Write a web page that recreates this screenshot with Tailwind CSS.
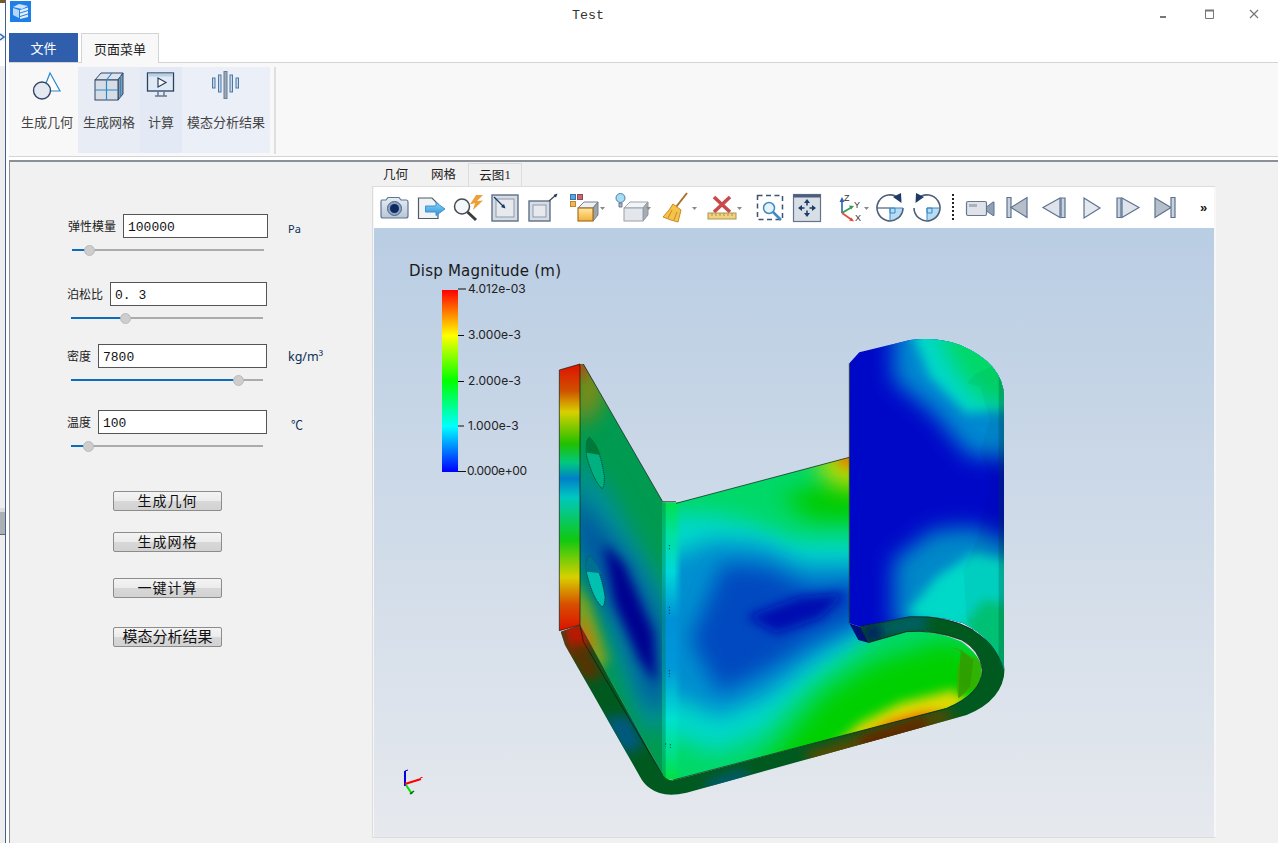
<!DOCTYPE html>
<html lang="zh">
<head>
<meta charset="utf-8">
<title>Test</title>
<script src="https://cdn.jsdelivr.net/npm/@tailwindcss/browser@4"></script>
</head>
<body class="m-0 overflow-hidden bg-white">
<div class="w-[1278px] h-[843px] flex overflow-hidden bg-white font-['Noto_Sans_CJK_SC','Noto_Sans',sans-serif] text-[#222]">
  <!-- sliver of the window behind -->
  <div class="w-[9px] shrink-0 flex bg-white">
    <div class="w-[5px] flex flex-col bg-[#f4f4f4]">
      <div class="h-[3px] bg-[#7a5a20]"></div>
      <div class="h-[30px] bg-white"></div>
      <svg class="w-[5px] h-[8px] shrink-0" viewBox="0 0 5 8"><path d="M0 1L4 4L0 7" fill="none" stroke="#2a70b8" stroke-width="1.500"/></svg>
      <div class="h-[25px] bg-white"></div>
      <div class="h-[442px] bg-[#eeeeee]"></div>
      <div class="h-[27px] bg-[#aab0b4] border-t-[4px] border-[#dddddd] border-b border-b-[#666]"></div>
      <div class="flex-1 bg-[#eeeeee]"></div>
    </div>
    <div class="w-px bg-[#46608e]"></div>
  </div>

  <div class="flex-1 flex flex-col min-w-0">
    <!-- title bar -->
    <div class="h-[33px] shrink-0 flex items-start bg-white">
      <svg class="w-[21px] h-[21px] mt-px ml-px shrink-0" viewBox="0 0 21 21">
        <rect width="21" height="21" fill="#1f7fe8"/>
        <path d="M3 6 L9 3 L18 5 L12 8 Z" fill="#cfe3fa"/>
        <path d="M3 7 L9 9 V17 L3 14 Z" fill="#b9d6f7"/>
        <path d="M10 9 L18 6.500 V9 L10 11.500 Z M10 12.500 L18 10 V12.500 L10 15 Z M10 16 L18 13.500 V16 L10 18 Z" fill="#e4f0fc"/>
      </svg>
      <div class="flex-1 text-center font-['Liberation_Mono',monospace] text-[13.300px] leading-[15px] pt-[8px] pr-[4px] text-[#333]">Test</div>
      <div class="w-[129px] flex items-start shrink-0">
        <svg class="w-[12px] h-[12px] mt-[10px] ml-[11px]" viewBox="0 0 12 12"><rect x="0" y="6" width="6" height="2" fill="#777"/></svg>
        <svg class="w-[12px] h-[12px] mt-[9px] ml-[32px]" viewBox="0 0 12 12"><path d="M1.500 1.500H9.500V9.500H1.500Z" fill="none" stroke="#777"/><path d="M1 1.500H10" stroke="#777" stroke-width="2"/></svg>
        <svg class="w-[12px] h-[12px] mt-[9px] ml-[33px]" viewBox="0 0 12 12"><path d="M1 1L9 9M9 1L1 9" stroke="#777" stroke-width="1.200"/></svg>
      </div>
    </div>

    <!-- ribbon tabs -->
    <div class="h-[29px] shrink-0 flex items-end bg-white relative z-10">
      <div class="w-[69px] h-[29px] bg-[#2f5fac] text-white text-[13px] flex items-center justify-center">文件</div>
      <div class="w-[78px] h-[30px] ml-[3px] -mb-px bg-[#f8f8f8] border border-b-0 border-[#d4d4d4] text-[13px] flex items-center justify-center">页面菜单</div>
    </div>

    <!-- ribbon -->
    <div class="h-[95px] shrink-0 bg-[#f8f8f8] border-t border-b border-[#d4d4d4] flex items-stretch pt-1 pb-[3px] text-[13px] text-[#444]">
      <div class="w-[69px] flex flex-col items-center">
        <svg class="w-[30px] h-[30px] mt-[4px] ml-[7px]" viewBox="0 0 30 30"><path d="M18 2 L28 20 H11Z" fill="#fff" stroke="#2a8ac8" stroke-width="1.200"/><circle cx="10" cy="19.500" r="8.500" fill="#e4e8f0" stroke="#334466" stroke-width="1.400"/></svg>
        <div class="mt-[12px] ml-[7px] leading-[18px]">生成几何</div>
      </div>
      <div class="w-[62px] flex flex-col items-center bg-[#e8ecf5]">
        <svg class="w-[30px] h-[30px] mt-[4px]" viewBox="0 0 30 30"><path d="M1 9 L7 2 H29 L24 9Z" fill="#dbe3ec" stroke="#334466"/><path d="M24 9 L29 2 V23 L24 29Z" fill="#8d99aa" stroke="#334466"/><rect x="1" y="9" width="23" height="20" fill="#d6dde5" stroke="#334466"/><path d="M12.500 9V29M1 19H24M12.500 9L18 2M26.500 5V26" stroke="#2a8ac8" stroke-width="1.200" fill="none"/></svg>
        <div class="mt-[12px] leading-[18px]">生成网格</div>
      </div>
      <div class="w-[42px] flex flex-col items-center bg-[#e4eaf5]">
        <svg class="w-[30px] h-[30px] mt-[4px]" viewBox="0 0 30 30"><rect x="1.500" y="2" width="26" height="18" fill="#dfeaf4" stroke="#2b3f63" stroke-width="1.300"/><rect x="2" y="2.500" width="25" height="3" fill="#b9d0e4"/><path d="M12 7 L20 11.500 L12 16Z" fill="#fff" stroke="#2b3f63" stroke-width="1.200"/><path d="M12 20V25M18 20V25M9 25H21" stroke="#66778e" stroke-width="1.500"/></svg>
        <div class="mt-[12px] leading-[18px]">计算</div>
      </div>
      <div class="w-[88px] flex flex-col items-center bg-[#ebeff7]">
        <svg class="w-[30px] h-[30px] mt-[4px]" viewBox="0 0 30 30"><rect x="1.500" y="7" width="2.500" height="10" fill="#c8d6e6" stroke="#4a79a8"/><rect x="7.500" y="4" width="2.500" height="17" fill="#c8d6e6" stroke="#4a79a8"/><rect x="13" y="0.500" width="3" height="27" fill="#9aa9ba" stroke="#6a7b8e"/><rect x="19" y="4" width="2.500" height="17" fill="#c8d6e6" stroke="#4a79a8"/><rect x="25" y="7" width="2.500" height="10" fill="#c8d6e6" stroke="#4a79a8"/></svg>
        <div class="mt-[12px] leading-[18px] whitespace-nowrap">模态分析结果</div>
      </div>
      <div class="ml-[4px] w-[2px] bg-[#dfdfdf] -mb-px"></div>
    </div>

    <div class="h-[3px] shrink-0 bg-white"></div>

    <!-- main -->
    <div class="flex-1 min-h-0 flex bg-[#f1f1f1] border-t-[2px] border-l border-[#8b9096]">
      <!-- form panel -->
      <div class="w-[362px] shrink-0 flex flex-col text-[12px] leading-[16px] text-[#222]">
        <div class="mt-[52px] h-[24px] flex items-center">
          <span class="ml-[58px] w-[55px] shrink-0 -mt-[1px] whitespace-nowrap">弹性模量</span>
          <input value="100000" class="w-[145px] h-[24px] bg-white border border-[#555] px-1 pt-[2px] font-['Liberation_Mono',monospace] text-[13px] text-[#111]">
          <span class="ml-[20px] mt-[5px] text-[#0b2f55] font-['Noto_Sans',sans-serif] text-[11px]">Pa</span>
        </div>
        <div class="mt-[6px] ml-[62px] w-[192px] h-[12px] relative flex items-center">
          <div class="w-full h-[2px] bg-[#ababab]"></div>
          <div class="absolute left-0 top-[5px] h-[2px] w-[16px] bg-[#0f6cbd]"></div>
          <div class="absolute left-[12px] top-[1px] w-[11px] h-[11px] rounded-full bg-[#cdcdcd] border border-[#bbb]"></div>
        </div>

        <div class="mt-[26px] h-[24px] flex items-center">
          <span class="ml-[57px] w-[43px] shrink-0 -mt-[1px] whitespace-nowrap">泊松比</span>
          <input value="0. 3" class="w-[157px] h-[24px] bg-white border border-[#555] px-1 pt-[2px] font-['Liberation_Mono',monospace] text-[13px] text-[#111]">
        </div>
        <div class="mt-[6px] ml-[61px] w-[192px] h-[12px] relative flex items-center">
          <div class="w-full h-[2px] bg-[#ababab]"></div>
          <div class="absolute left-0 top-[5px] h-[2px] w-[52px] bg-[#0f6cbd]"></div>
          <div class="absolute left-[49px] top-[1px] w-[11px] h-[11px] rounded-full bg-[#cdcdcd] border border-[#bbb]"></div>
        </div>

        <div class="mt-[20px] h-[24px] flex items-center">
          <span class="ml-[57px] w-[31px] shrink-0 -mt-[1px] whitespace-nowrap">密度</span>
          <input value="7800" class="w-[169px] h-[24px] bg-white border border-[#555] px-1 pt-[2px] font-['Liberation_Mono',monospace] text-[13px] text-[#111]">
          <span class="ml-[21px] mt-[2px] text-[#0b2f55] font-['Noto_Sans',sans-serif] text-[12.500px] whitespace-nowrap">kg/m³</span>
        </div>
        <div class="mt-[6px] ml-[61px] w-[192px] h-[12px] relative flex items-center">
          <div class="w-full h-[2px] bg-[#ababab]"></div>
          <div class="absolute left-0 top-[5px] h-[2px] w-[165px] bg-[#0f6cbd]"></div>
          <div class="absolute left-[162px] top-[1px] w-[11px] h-[11px] rounded-full bg-[#cdcdcd] border border-[#bbb]"></div>
        </div>

        <div class="mt-[24px] h-[24px] flex items-center">
          <span class="ml-[57px] w-[31px] shrink-0 -mt-[1px] whitespace-nowrap">温度</span>
          <input value="100" class="w-[169px] h-[24px] bg-white border border-[#555] px-1 pt-[2px] font-['Liberation_Mono',monospace] text-[13px] text-[#111]">
          <span class="ml-[24px] mt-[5px] text-[#0b2f55] text-[12px]">℃</span>
        </div>
        <div class="mt-[6px] ml-[61px] w-[192px] h-[12px] relative flex items-center">
          <div class="w-full h-[2px] bg-[#ababab]"></div>
          <div class="absolute left-0 top-[5px] h-[2px] w-[14px] bg-[#0f6cbd]"></div>
          <div class="absolute left-[12px] top-[1px] w-[11px] h-[11px] rounded-full bg-[#cdcdcd] border border-[#bbb]"></div>
        </div>

        <div class="ml-[103px] w-[109px] flex flex-col text-[14px] leading-[16px] text-[#111]">
          <div class="mt-[39px] h-[20px] rounded-[2px] border border-[#8c8c8c] bg-[linear-gradient(#f4f4f4_0%,#ebebeb_50%,#d8d8d8_50%,#d2d2d2_100%)] flex items-center justify-center tracking-[1px] pb-[2px]">生成几何</div>
          <div class="mt-[21px] h-[20px] rounded-[2px] border border-[#8c8c8c] bg-[linear-gradient(#f4f4f4_0%,#ebebeb_50%,#d8d8d8_50%,#d2d2d2_100%)] flex items-center justify-center tracking-[1px] pb-[2px]">生成网格</div>
          <div class="mt-[26px] h-[20px] rounded-[2px] border border-[#8c8c8c] bg-[linear-gradient(#f4f4f4_0%,#ebebeb_50%,#d8d8d8_50%,#d2d2d2_100%)] flex items-center justify-center tracking-[1px] pb-[2px]">一键计算</div>
          <div class="mt-[29px] h-[20px] rounded-[2px] border border-[#8c8c8c] bg-[linear-gradient(#f4f4f4_0%,#ebebeb_50%,#d8d8d8_50%,#d2d2d2_100%)] flex items-center justify-center text-[15px] pb-[2px]">模态分析结果</div>
        </div>
      </div>

      <!-- viewer -->
      <div class="w-[844px] shrink-0 flex flex-col">
        <div class="h-[24px] shrink-0 flex items-end text-[12.500px] text-[#222]">
          <div class="w-[47px] h-[24px] flex items-center justify-center">几何</div>
          <div class="w-[49px] h-[24px] flex items-center justify-center">网格</div>
          <div class="w-[54px] h-[24px] -mb-px bg-[#f1f1f1] border border-b-0 border-[#dcdcdc] flex items-center justify-center">云图<span class="font-['Liberation_Serif',serif]">1</span></div>
        </div>
        <div class="w-[844px] h-[652px] shrink-0 border border-[#dcdcdc] border-r-[#f8f8f8] flex flex-col px-px bg-[#f6f6f6]">
          <!-- toolbar -->
          <div class="h-[41px] shrink-0 bg-white flex items-center">
            <svg class="w-[840px] h-[41px]" viewBox="374 187 840 41">
              <defs>
                <linearGradient id="mi" x1="0" y1="0" x2="0" y2="1"><stop offset="0" stop-color="#e7edf4"/><stop offset="1" stop-color="#b9c6d6"/></linearGradient>
                <linearGradient id="ar" x1="0" y1="0" x2="0" y2="1"><stop offset="0" stop-color="#8cd0f4"/><stop offset="1" stop-color="#2d95d8"/></linearGradient>
                <linearGradient id="yb" x1="0" y1="0" x2="0" y2="1"><stop offset="0" stop-color="#ffe9a0"/><stop offset="1" stop-color="#f3b13a"/></linearGradient>
              </defs>
              <!-- camera -->
              <path d="M381.500 200 H386 L388 197.500 H399 L401 200 H406.500 Q408 200 408 202 V216 Q408 218 406 218 H383 Q381 218 381 216 V202 Q381 200 381.500 200Z" fill="url(#mi)" stroke="#5b7596" stroke-width="1.200"/>
              <circle cx="394.500" cy="208.500" r="7" fill="#8ea3be" stroke="#4c6586"/><circle cx="394.500" cy="208.500" r="4.500" fill="#0d2a63"/>
              <!-- save as arrow -->
              <path d="M418.500 198 H432 L438 204 V218.500 H418.500Z" fill="#f0f2f5" stroke="#505a68" stroke-width="1.200"/>
              <path d="M425.500 206 H436 V202.500 L445 209 L436 215.500 V212 H425.500Z" fill="url(#ar)" stroke="#3d93d2"/>
              <!-- magnifier + lightning -->
              <circle cx="462" cy="206.500" r="7.500" fill="#f3f6fa" stroke="#4a4a4a" stroke-width="1.500"/><path d="M467.500 212 L476 220" stroke="#3c3c3c" stroke-width="3"/>
              <path d="M476 195 L483 195 L477 201 L483 200.500 L473 210 L475 203 L470 204.500Z" fill="#ee9f37"/>
              <!-- fit box in -->
              <rect x="492" y="195" width="26" height="26" fill="#d6dce4" stroke="#5e7089" stroke-width="1.400"/><rect x="496" y="199" width="18" height="18" fill="#e6eaef" stroke="#8e9aaa"/>
              <path d="M494 197 L504 207" stroke="#1a3766" stroke-width="1.200"/><path d="M505.500 208.500 L501 207 L504 204Z" fill="#1a3766"/>
              <!-- fit box out -->
              <rect x="529" y="201" width="21" height="20" fill="#d6dce4" stroke="#5e7089" stroke-width="1.400"/><rect x="533" y="205" width="13" height="12" fill="#e6eaef" stroke="#8e9aaa"/>
              <path d="M549 201 L556 195" stroke="#444" stroke-width="1.200"/><path d="M557.500 193.500 L556 197.500 L553.500 195Z" fill="#1a3766"/>
              <!-- view cube with swatches -->
              <rect x="570.500" y="194.500" width="5" height="5" fill="#57a8e0" stroke="#3774a8"/><rect x="577.500" y="194.500" width="5" height="5" fill="#c96a6a" stroke="#8a4a5a"/><rect x="570.500" y="201.500" width="5" height="5" fill="#ecb85a" stroke="#c0852d"/>
              <path d="M578 208 L584 202 H598 L593 208Z" fill="#eef0f3" stroke="#76808e"/><path d="M593 208 L598 202 V215 L593 221Z" fill="#9aa3ae" stroke="#76808e"/><rect x="578" y="208" width="15" height="13" fill="url(#yb)" stroke="#a86f1e" stroke-width="1.200"/>
              <path d="M600 207 H605 L602.500 210Z" fill="#888"/>
              <!-- light cube -->
              <circle cx="620.500" cy="198" r="4.500" fill="#a6dcf6" stroke="#4e7ea8"/><path d="M619 203 H622 V207 H619Z" fill="#aab5c2" stroke="#6a7b8e"/>
              <path d="M624 208 L630 202 H648 L643 208Z" fill="#f3f4f6" stroke="#9ba3ad"/><path d="M643 208 L648 202 V215 L643 221Z" fill="#a3abb5" stroke="#8f98a3"/><rect x="624" y="208" width="19" height="13" fill="#e3e6ea" stroke="#98a0aa"/>
              <path d="M646 207 H651 L648.500 210Z" fill="#888"/>
              <!-- broom -->
              <path d="M687 193 L676 207" stroke="#a8702c" stroke-width="2"/><path d="M673 204 L681 210 L678 222 L671 220 L663 217 L669 210Z" fill="#f5c24c" stroke="#c98a24"/><path d="M672 210 L668 218M677 212 L674 220" stroke="#c98a24"/>
              <path d="M692 207 H697 L694.500 210Z" fill="#888"/>
              <!-- ruler with x -->
              <path d="M714 197 L730 212 M730 197 L714 212" stroke="#c94a4a" stroke-width="3.600"/>
              <rect x="708" y="213" width="28" height="6" fill="#f2d27a" stroke="#a8935a"/><path d="M712 213V216M716 213V216M720 213V216M724 213V216M728 213V216M732 213V216" stroke="#a8935a"/>
              <path d="M737 207 H742 L739.500 210Z" fill="#888"/>
              <!-- zoom box -->
              <rect x="757.500" y="195.500" width="25" height="24" fill="none" stroke="#3f5270" stroke-width="1.500" stroke-dasharray="5 3.500"/>
              <circle cx="769" cy="208" r="5.500" fill="#e6f2fa" stroke="#3f8ac4" stroke-width="1.500"/><path d="M773 212 L781 220" stroke="#3f8ac4" stroke-width="2.500"/>
              <!-- pan window -->
              <rect x="793.500" y="194.500" width="27" height="27" fill="#d8dee6" stroke="#64748c" stroke-width="1.200"/><path d="M793.500 196 H820.500" stroke="#4a5d7a" stroke-width="3"/>
              <path d="M807 202 V205.500 M807 210.500 V214 M801 208 H804.500 M809.500 208 H813" stroke="#1e3a66" stroke-width="1.500"/><path d="M807 199 L804 203 H810Z M807 217 L804 213 H810Z M798 208 L802 205 V211Z M816 208 L812 205 V211Z" fill="#1e3a66"/>
              <!-- axes -->
              <path d="M842 213 V200" stroke="#2e5fb0" stroke-width="1.600"/><path d="M842 197 L839.500 202 H844.500Z" fill="#2e5fb0"/>
              <path d="M842 213 L852 207" stroke="#2f9e4f" stroke-width="1.600"/><path d="M854 206 L849 205.500 L851 209.500Z" fill="#2f9e4f"/>
              <path d="M842 213 L852 220" stroke="#e04a3a" stroke-width="1.600"/><path d="M854 221.500 L849 220.500 L851.500 217.500Z" fill="#e04a3a"/>
              <text x="844" y="201" font-family="Liberation Sans, sans-serif" font-size="9" fill="#333">Z</text>
              <text x="854" y="208" font-family="Liberation Sans, sans-serif" font-size="9" fill="#333">Y</text>
              <text x="855" y="221" font-family="Liberation Sans, sans-serif" font-size="9" fill="#333">X</text>
              <path d="M864 207 H869 L866.500 210Z" fill="#888"/>
              <!-- rotate cw -->
              <path d="M890 208 H903 A13 13 0 0 1 890 221Z" fill="#b6dcf4"/>
              <path d="M903 208 A13 13 0 1 1 899 198.500" fill="none" stroke="#4e5f78" stroke-width="1.600"/>
              <path d="M877 208 H890" stroke="#4e5f78" stroke-width="1.200"/><path d="M890 208 H903 M890 208 V221" stroke="#3a88c4"/>
              <path d="M890 208 H895 V213 H890Z" fill="none" stroke="#3a88c4"/>
              <path d="M893 197 L901 193 L901.500 203Z" fill="#1e3a66"/>
              <!-- rotate ccw -->
              <path d="M927 208 H940 A13 13 0 0 1 927 221Z" fill="#b6dcf4"/>
              <path d="M914 208 A13 13 0 1 0 918 198.500" fill="none" stroke="#4e5f78" stroke-width="1.600"/>
              <path d="M927 208 H940 M927 208 V221" stroke="#3a88c4"/>
              <path d="M927 208 H932 V213 H927Z" fill="none" stroke="#3a88c4"/>
              <path d="M924 197 L916 193 L915.500 203Z" fill="#1e3a66"/>
              <!-- dotted separator -->
              <path d="M953 194 V220" stroke="#222" stroke-width="2" stroke-dasharray="2 2"/>
              <!-- video camera -->
              <rect x="966.500" y="201.500" width="20" height="14" rx="1.500" fill="#dfe3e9" stroke="#66788f" stroke-width="1.200"/><rect x="969" y="204" width="8" height="3" fill="#a9b3bf"/>
              <path d="M986.500 207 L993 202 H994 V215.500 H993 L986.500 211Z" fill="#8fa0b4" stroke="#5d7390"/>
              <!-- first -->
              <path d="M1007 197.500 H1011 V217.500 H1007Z" fill="#c8d2de" stroke="#5c7290" stroke-width="1.200"/><path d="M1011 207.500 L1027 197.500 V217.500Z" fill="#b6bec9" stroke="#5c7290" stroke-width="1.200"/>
              <!-- prev -->
              <path d="M1043 207.500 L1060 198 V217.500Z" fill="#dfe4ea" stroke="#5c7290" stroke-width="1.200"/><path d="M1061 198 H1065 V217.500 H1061Z" fill="#c8d2de" stroke="#5c7290" stroke-width="1.200"/>
              <!-- play -->
              <path d="M1084 198 L1100 208 L1084 218Z" fill="#e4e8ee" stroke="#5c7290" stroke-width="1.200"/>
              <!-- next -->
              <path d="M1117 198 H1121 V217.500 H1117Z" fill="#c8d2de" stroke="#5c7290" stroke-width="1.200"/><path d="M1122 198 L1139 207.500 L1122 217.500Z" fill="#dfe4ea" stroke="#5c7290" stroke-width="1.200"/>
              <!-- last -->
              <path d="M1155 198 L1171 207.500 L1155 217.500Z" fill="#b6bec9" stroke="#5c7290" stroke-width="1.200"/><path d="M1171 197.500 H1175 V217.500 H1171Z" fill="#c8d2de" stroke="#5c7290" stroke-width="1.200"/>
              <text x="1200" y="212" font-family="Liberation Sans, sans-serif" font-size="13" font-weight="700" fill="#111">»</text>
            </svg>
          </div>

          <!-- 3D viewport -->
          <div class="h-[609px] shrink-0 w-[840px] bg-[linear-gradient(#b9cde3_0%,#e6e9ee_100%)] overflow-hidden">
            <svg class="w-[840px] h-[609px] block" viewBox="374 228 840 609">
              <defs>
                <linearGradient id="cbar" x1="0" y1="0" x2="0" y2="1">
                  <stop offset="0" stop-color="#ff0000"/><stop offset=".25" stop-color="#ffff00"/><stop offset=".5" stop-color="#00ff00"/><stop offset=".75" stop-color="#00ffff"/><stop offset="1" stop-color="#0000ff"/>
                </linearGradient>
                <linearGradient id="endface" x1="0" y1="72" x2="0" y2="872" gradientUnits="userSpaceOnUse">
                  <stop offset="0" stop-color="#e01000"/><stop offset=".1" stop-color="#d05000"/><stop offset=".18" stop-color="#d8d000"/><stop offset=".3" stop-color="#20c000"/><stop offset=".37" stop-color="#00c880"/><stop offset=".43" stop-color="#0080c8"/><stop offset=".5" stop-color="#00c8c0"/><stop offset=".66" stop-color="#10c810"/><stop offset=".8" stop-color="#d8d000"/><stop offset=".9" stop-color="#d85000"/><stop offset="1" stop-color="#dd1000"/>
                </linearGradient>
                <linearGradient id="foldstrip" x1="0" y1="487" x2="0" y2="1319" gradientUnits="userSpaceOnUse">
                  <stop offset="0" stop-color="#00e050"/><stop offset=".12" stop-color="#00e0a0"/><stop offset=".25" stop-color="#00d8d8"/><stop offset=".42" stop-color="#0090d8"/><stop offset=".6" stop-color="#0098d8"/><stop offset=".78" stop-color="#00e0d0"/><stop offset=".92" stop-color="#00e080"/><stop offset="1" stop-color="#00e040"/>
                </linearGradient>
                <linearGradient id="stripfade" x1="0" y1="0" x2="1" y2="0">
                  <stop offset="0" stop-color="#fff"/><stop offset=".6" stop-color="#fff"/><stop offset="1" stop-color="#000"/>
                </linearGradient>
                <mask id="stripmask" maskUnits="userSpaceOnUse" x="360" y="480" width="80" height="850"><rect x="366" y="480" width="60" height="850" fill="url(#stripfade)"/></mask>
                <filter id="b4" x="-150%" y="-150%" width="400%" height="400%"><feGaussianBlur stdDeviation="16"/></filter>
                <filter id="b7" x="-100%" y="-100%" width="300%" height="300%"><feGaussianBlur stdDeviation="32"/></filter>
                <filter id="b10" x="-100%" y="-100%" width="300%" height="300%"><feGaussianBlur stdDeviation="45"/></filter>
                <clipPath id="backClip"><path d="M408 490 L928 352 V850 L985 908 L1100 875 Q1180 868 1265 905 Q1325 950 1325 990 Q1325 1050 1265 1080 L1220 1105 L400 1320 L376 1310 V490Z"/></clipPath>
                <clipPath id="plateClip"><path d="M120 72 L130 72 L368 485 V1305 L120 855Z"/></clipPath>
                <clipPath id="rimClip"><path d="M62 875 L120 855 L368 1305 Q385 1325 405 1320 L1220 1105 Q1325 1060 1327 990 Q1320 930 1265 900 Q1180 868 1100 875 L985 908 L960 860 L1110 830 Q1220 825 1300 870 Q1392 930 1394 990 Q1390 1080 1280 1125 L440 1358 Q370 1375 330 1345 Q310 1330 300 1310 L75 915 Z"/></clipPath>
                <clipPath id="rollClip"><path d="M928 70 L958 37 L1110 0 Q1190 -10 1260 15 Q1390 70 1392 170 V990 Q1370 900 1270 850 Q1200 825 1110 830 L960 860 L928 850Z"/></clipPath>
              </defs>

              <!-- colour legend -->
              <text x="409" y="276" font-family="DejaVu Sans, sans-serif" font-size="15" textLength="152" fill="#1a1a1a">Disp Magnitude (m)</text>
              <rect x="442" y="290" width="16" height="182" fill="url(#cbar)"/>
              <path d="M458 289 H466 M458 335.500 H464 M458 381.500 H464 M458 426 H464 M458 471.500 H466" stroke="#111" stroke-width="1.200"/>
              <g font-family="Inter, Noto Sans, sans-serif" font-size="12" fill="#222">
                <text x="468" y="293">4.012e-03</text>
                <text x="468" y="339">3.000e-3</text>
                <text x="468" y="385">2.000e-3</text>
                <text x="468" y="430">1.000e-3</text>
                <text x="467" y="475" textLength="60">0.000e+00</text>
              </g>

              <!-- axis triad -->
              <path d="M405 786 V771" stroke="#0000e0" stroke-width="2"/><path d="M405 771 L408 770" stroke="#0000e0" stroke-width="1"/>
              <path d="M405 784 L421 779" stroke="#ff0000" stroke-width="2"/><path d="M420.500 777.500 H422.500" stroke="#ff0000"/>
              <path d="M406 785 L412 794" stroke="#00e000" stroke-width="2"/><path d="M410 794 L414 791" stroke="#006000" stroke-width="1.500"/>

              <!-- model, drawn in 3x coordinates -->
              <g transform="translate(540 340) scale(0.33333)">
                <!-- left end face -->
                <path d="M58 90 L120 72 V855 L58 872Z" fill="url(#endface)"/>
                <!-- left plate -->
                <g clip-path="url(#plateClip)">
                  <rect x="100" y="50" width="290" height="1280" fill="#009a50"/>
                  <path d="M110 40 L200 120 L170 220 L100 260Z" fill="#8a8a10" filter="url(#b7)"/>
                  <path d="M105 40 L150 40 L145 110 L105 120Z" fill="#b05010" filter="url(#b4)"/>
                  <path d="M100 340 L200 440 L300 620 L385 770 V1170 L310 1170 L220 940 L140 690 L100 590Z" fill="#009098" filter="url(#b7)"/>
                  <path d="M90 440 L190 560 L280 670 L375 860 V1110 L320 1090 L240 880 L170 760 L100 590Z" fill="#0058a0" filter="url(#b7)"/>
                  <path d="M190 610 L250 670 L340 880 L350 1030 L300 960 L225 790Z" fill="#000090" filter="url(#b4)"/>
                  <path d="M100 720 L150 790 L205 960 L170 1000 L100 910Z" fill="#80a020" filter="url(#b4)"/>
                  <path d="M105 830 L135 850 L165 930 L125 910Z" fill="#d07010" filter="url(#b4)"/>
                </g>
                <!-- plate holes -->
                <g stroke="#082020" stroke-width="2" stroke-dasharray="4 2">
                  <path d="M148 292 Q180 320 193 410 Q194 445 185 445 Q160 420 140 350 Q135 300 148 292Z" fill="#00b080"/>
                  <path d="M148 648 Q180 680 195 770 Q194 800 186 800 Q160 780 140 700 Q135 655 148 648Z" fill="#00c0b0"/>
                </g>
                <path d="M148 292 Q170 310 182 345 L140 338 Q135 300 148 292Z" fill="#007838"/>
                <path d="M148 648 Q170 670 184 700 L140 695 Q135 655 148 648Z" fill="#007090"/>
                <!-- back plate -->
                <g clip-path="url(#backClip)">
                  <rect x="360" y="340" width="1000" height="1000" fill="#00d868"/>
                  <path d="M720 470 L980 390 V540 L820 540Z" fill="#00cc00" filter="url(#b7)"/>
                  <path d="M810 350 L980 310 V450 L880 440Z" fill="#b8d800" filter="url(#b7)"/>
                  <path d="M880 340 L960 320 V385 L905 385Z" fill="#e08800" filter="url(#b4)"/>
                  <path d="M340 520 L520 520 L640 550 L770 600 L980 600 V900 L810 1030 L670 1180 L530 1240 L400 1190 L340 1190Z" fill="#00d8c8" filter="url(#b7)"/>
                  <path d="M340 670 L520 600 L660 610 L790 670 L980 670 V860 L820 960 L680 1070 L540 1130 L420 1080 L340 1060Z" fill="#0090d0" filter="url(#b7)"/>
                  <path d="M450 900 L550 670 L680 680 L810 740 L980 725 V830 L820 900 L680 990 L540 1060Z" fill="#0048c0" filter="url(#b7)"/>
                  <path d="M620 830 L780 770 L920 760 L840 835 L710 880Z" fill="#0010b0" filter="url(#b4)"/>
                  <path d="M580 1380 L720 1220 L860 1060 L1000 970 L1210 900 L1360 950 V1200 L800 1400Z" fill="#00d000" filter="url(#b7)"/>
                  <path d="M860 1240 L960 1150 L1080 1090 L1240 1050 L1300 1100 L1200 1130 L1000 1220Z" fill="#e0dc00" filter="url(#b4)"/>
                  <path d="M950 1200 L1050 1145 L1140 1120 L1220 1115 L1120 1170Z" fill="#f05800" filter="url(#b4)"/>
                  <path d="M1230 920 L1320 960 Q1330 1000 1310 1040 L1255 1075 Q1240 1000 1270 930Z" fill="#50a000" opacity=".6"/>
                  <path d="M1262 930 L1300 960 L1290 1040 L1255 1075Z" fill="#2c9000" opacity=".5"/>
                </g>
                <!-- fold strip -->
                <rect x="366" y="487" width="60" height="832" fill="url(#foldstrip)" mask="url(#stripmask)"/>
                <rect x="366" y="487" width="11" height="825" fill="#007848" opacity=".4"/>
                <!-- rim -->
                <g clip-path="url(#rimClip)">
                  <rect x="50" y="800" width="1360" height="600" fill="#005a20"/>
                  <path d="M60 850 L130 840 L160 920 L90 950Z" fill="#c01800" filter="url(#b4)"/>
                  <path d="M80 920 L135 910 L190 1010 L130 1020Z" fill="#5a3000" filter="url(#b4)"/>
                  <path d="M190 1130 L270 1130 L310 1220 L250 1240Z" fill="#005a80" filter="url(#b4)"/>
                  <path d="M490 1330 L600 1290 L640 1310 L520 1360Z" fill="#005a78" filter="url(#b4)"/>
                  <path d="M790 1240 L1200 1110 L1260 1130 L840 1290Z" fill="#584a00" filter="url(#b4)"/>
                  <path d="M960 1190 L1150 1130 L1170 1170 L960 1240Z" fill="#602800" filter="url(#b4)"/>
                  <path d="M1010 850 L1160 820 L1160 870 L1010 890Z" fill="#006068" filter="url(#b4)"/>
                  <path d="M960 860 L1020 850 L1030 900 L985 910Z" fill="#002068" filter="url(#b4)"/>
                </g>
                <path d="M928 850 L960 860 L985 908 L955 900Z" fill="#00107a"/>
                <!-- roll -->
                <g clip-path="url(#rollClip)">
                  <rect x="920" y="-10" width="480" height="1010" fill="#0008c8"/>
                  <path d="M1060 -60 H1440 V350 L1290 350 L1180 220 L1060 120Z" fill="#0088d0" filter="url(#b7)"/>
                  <path d="M1100 -60 H1440 V200 L1280 220 L1170 110Z" fill="#00d8c8" filter="url(#b4)"/>
                  <path d="M1190 -60 H1440 V210 L1310 170 L1230 60Z" fill="#00d868" filter="url(#b7)"/>
                  <path d="M1060 660 L1180 570 L1300 560 L1440 620 V1030 L1300 890 L1060 870Z" fill="#0088c8" filter="url(#b7)"/>
                  <path d="M1100 820 L1190 710 L1300 640 L1440 670 V1030 L1300 900 L1190 860Z" fill="#00d8c8" filter="url(#b4)"/>
                  <path d="M1270 860 L1330 780 L1440 800 V1040 L1340 930Z" fill="#00c878" filter="url(#b4)"/>
                  <path d="M1280 130 L1320 140 L1350 240 L1320 330 L1350 430 L1310 600 L1270 690 L1280 840 L1400 1000 V60 L1310 100Z" fill="#000" opacity=".04"/>
                  <path d="M1376 60 H1395 V1000 H1376Z" fill="#004020" opacity=".25"/>
                </g>
                <!-- black edges -->
                <g fill="none" stroke="#0a1410" stroke-width="2">
                  <path d="M58 90 V872 L120 855 V72 L58 90"/>
                  <path d="M130 72 L368 485 M120 855 L130 905 L368 1305"/>
                  <path d="M408 490 L928 352"/>
                  <path d="M928 70 V850"/>
                  <path d="M400 1320 L1220 1105 Q1325 1060 1327 990 Q1320 930 1265 900 Q1180 868 1100 875 L985 908 L960 860 L1110 830 Q1220 825 1300 870"/>
                  <path d="M368 485 H408"/>
                  <path d="M388 615 V628 M388 800 V822 M388 990 V1010 M377 1210 V1220 M391 1212 V1224" stroke-dasharray="4 5"/>
                </g>
              </g>
            </svg>
          </div>
        </div>
      </div>
      <div class="flex-1"></div>
    </div>
  </div>
</div>
</body>
</html>
